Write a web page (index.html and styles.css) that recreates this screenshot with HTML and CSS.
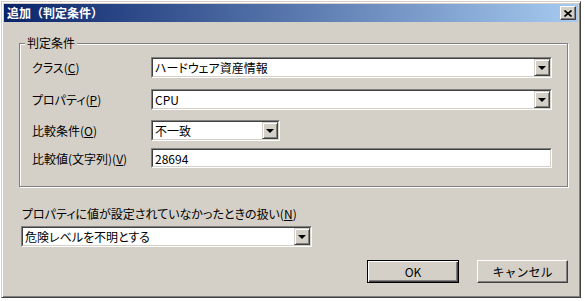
FILE: index.html
```html
<!DOCTYPE html>
<html lang="ja">
<head>
  <meta charset="UTF-8" />
  <meta name="viewport" content="width=device-width, initial-scale=1.0"/>
  <title>追加（判定条件）</title>
  <link rel="stylesheet" href="styles.css">
</head>
<body>
  <div class="window">
    <div class="titlebar">
      <span class="title">追加（判定条件）</span>
      <span class="close-btn">
        <svg width="8" height="7" viewBox="0 0 8 7"><path d="M0.5 0.5 L7.5 6.5 M7.5 0.5 L0.5 6.5" stroke="#000" stroke-width="1.6"/></svg>
      </span>
    </div>

    <div class="content">
      <div class="group">
        <span class="legend">判定条件</span>

        <div class="row">
          <span class="label">クラス(<u>C</u>)</span>
          <div class="field wide">
            <div class="field-inner">
              <span class="value">ハードウェア資産情報</span>
              <span class="arrow"></span>
            </div>
          </div>
        </div>

        <div class="row row-prop">
          <span class="label">プロパティ(<u>P</u>)</span>
          <div class="field wide">
            <div class="field-inner">
              <span class="value">CPU</span>
              <span class="arrow"></span>
            </div>
          </div>
        </div>

        <div class="row row-cmp">
          <span class="label">比較条件(<u>O</u>)</span>
          <div class="field narrow">
            <div class="field-inner">
              <span class="value">不一致</span>
              <span class="arrow"></span>
            </div>
          </div>
        </div>

        <div class="row row-val">
          <span class="label">比較値(文字列)(<u>V</u>)</span>
          <div class="field wide text">
            <div class="field-inner">
              <span class="value">28694</span>
            </div>
          </div>
        </div>
      </div>

      <div class="unset-label">プロパティに値が設定されていなかったときの扱い(<u>N</u>)</div>
      <div class="field unset">
        <div class="field-inner">
          <span class="value">危険レベルを不明とする</span>
          <span class="arrow"></span>
        </div>
      </div>

      <div class="buttons">
        <button class="btn btn-default">OK</button>
        <button class="btn">キャンセル</button>
      </div>
    </div>
  </div>
</body>
</html>
```

FILE: styles.css
```css
body {
  margin: 0;
  background: #fff;
  font-family: "Noto Sans CJK JP", sans-serif;
  font-size: 12px;
  font-feature-settings: "palt";
  color: #000;
}

.window {
  margin: 1px 0 0 1px;
  width: 580px;
  height: 297px;
  box-sizing: border-box;
  padding: 2px;
  background: #d4d0c8;
  border: 1px solid;
  border-color: #d4d0c8 #404040 #404040 #d4d0c8;
  box-shadow: inset 1px 1px #fff, inset -1px -1px #808080;
  display: flex;
  flex-direction: column;
}

.titlebar {
  height: 18px;
  flex: none;
  display: flex;
  align-items: center;
  justify-content: space-between;
  padding: 0 2px 0 3px;
  background: linear-gradient(to right, #0a246a, #a6caf0);
  color: #fff;
  font-weight: bold;
  line-height: 18px;
}

.title {
  font-feature-settings: normal;
}

.close-btn {
  width: 16px;
  height: 14px;
  box-sizing: border-box;
  background: #d4d0c8;
  border: 1px solid;
  border-color: #fff #404040 #404040 #fff;
  box-shadow: inset -1px -1px #808080;
  display: flex;
  align-items: center;
  justify-content: center;
}

.close-btn svg {
  display: block;
}

.content {
  padding: 21px 10px 0 15px;
}

.group {
  position: relative;
  height: 144px;
  box-sizing: border-box;
  border: 1px solid #808080;
  box-shadow: 1px 1px 0 #fff, inset 1px 1px 0 #fff;
  padding: 13px 15px 0 12px;
}

.legend {
  position: absolute;
  top: -9px;
  left: 5px;
  padding: 0 2px;
  background: #d4d0c8;
  line-height: 16px;
}

.row {
  display: flex;
  align-items: center;
}

.row-prop {
  margin-top: 11px;
}

.row-cmp {
  margin-top: 10px;
}

.row-val {
  margin-top: 7px;
}

.label {
  width: 119px;
  flex: none;
}

u {
  text-decoration: underline;
  text-underline-offset: 1px;
}

.field {
  height: 21px;
  box-sizing: border-box;
  border: 1px solid;
  border-color: #808080 #fff #fff #808080;
}

.field.text {
  height: 20px;
}

.field-inner {
  height: 100%;
  box-sizing: border-box;
  border: 1px solid;
  border-color: #404040 #d4d0c8 #d4d0c8 #404040;
  background: #fff;
  display: flex;
  align-items: center;
}

.wide {
  width: 401px;
}

.narrow {
  width: 129px;
}

.value {
  flex: 1;
  padding-left: 2px;
  line-height: 15px;
  white-space: nowrap;
}

.arrow {
  width: 16px;
  height: 100%;
  box-sizing: border-box;
  background: #d4d0c8;
  border: 1px solid;
  border-color: #d4d0c8 #404040 #404040 #d4d0c8;
  box-shadow: inset 1px 1px #fff, inset -1px -1px #808080;
  display: flex;
  align-items: center;
  justify-content: center;
}

.arrow::after {
  content: "";
  border-left: 4px solid transparent;
  border-right: 4px solid transparent;
  border-top: 4px solid #000;
  margin-left: -1px;
}

.unset-label {
  margin-top: 19px;
  line-height: 15px;
  margin-left: 3px;
}

.unset {
  margin-top: 5px;
  margin-left: 2px;
  width: 291px;
}

.buttons {
  display: flex;
  justify-content: flex-end;
  gap: 18px;
  margin-top: 13px;
}

.btn {
  width: 91px;
  height: 23px;
  box-sizing: border-box;
  padding: 0;
  font-family: inherit;
  font-size: 12px;
  color: #000;
  background: #d4d0c8;
  border: 1px solid;
  border-color: #fff #404040 #404040 #fff;
  box-shadow: inset -1px -1px #808080;
}

.btn-default {
  width: 92px;
  border: 1px solid #000;
  box-shadow: inset 1px 1px #fff, inset -1px -1px #404040, inset -2px -2px #808080;
}
```
